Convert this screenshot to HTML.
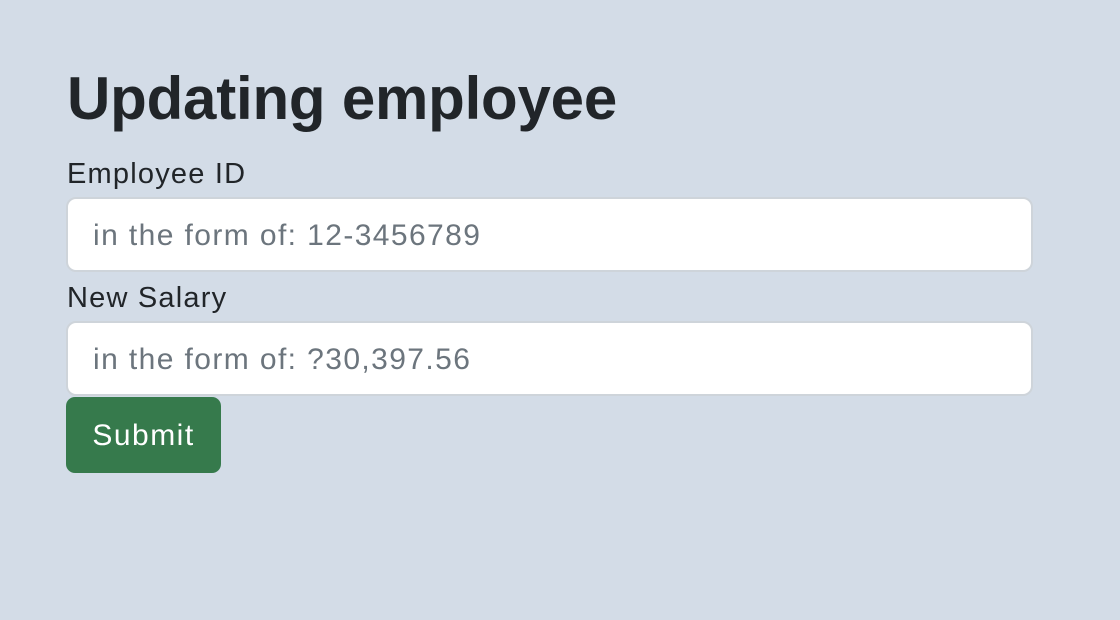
<!DOCTYPE html>
<html><head><style>
body{margin:0;background:#d3dce7;font-family:"Liberation Sans",sans-serif;width:1120px;height:620px;overflow:hidden;}
h1{position:absolute;left:67px;top:64px;margin:0;font-size:60px;font-weight:bold;color:#212529;line-height:70px;letter-spacing:-0.2px}
.lbl{position:absolute;left:67px;font-size:29px;color:#212529;letter-spacing:1.2px}
.inp{position:absolute;left:66px;width:967px;height:75px;background:#fff;border:2px solid #ced4da;border-radius:10px;box-sizing:border-box;font-size:30px;color:#6c757d;padding-left:25px;line-height:74px;letter-spacing:1.4px}
.btn{position:absolute;left:66px;top:397px;width:155px;height:76px;background:#367a4c;border-radius:9px;color:#fff;font-size:30px;line-height:78px;text-align:center;letter-spacing:1.5px}
</style></head><body>
<h1>Updating employee</h1>
<div class="lbl" style="top:158px">Employee ID</div>
<div class="inp" style="top:197px">in the form of: 12-3456789</div>
<div class="lbl" style="top:282px">New Salary</div>
<div class="inp" style="top:321px">in the form of: ?30,397.56</div>
<div class="btn">Submit</div>
</body></html>
